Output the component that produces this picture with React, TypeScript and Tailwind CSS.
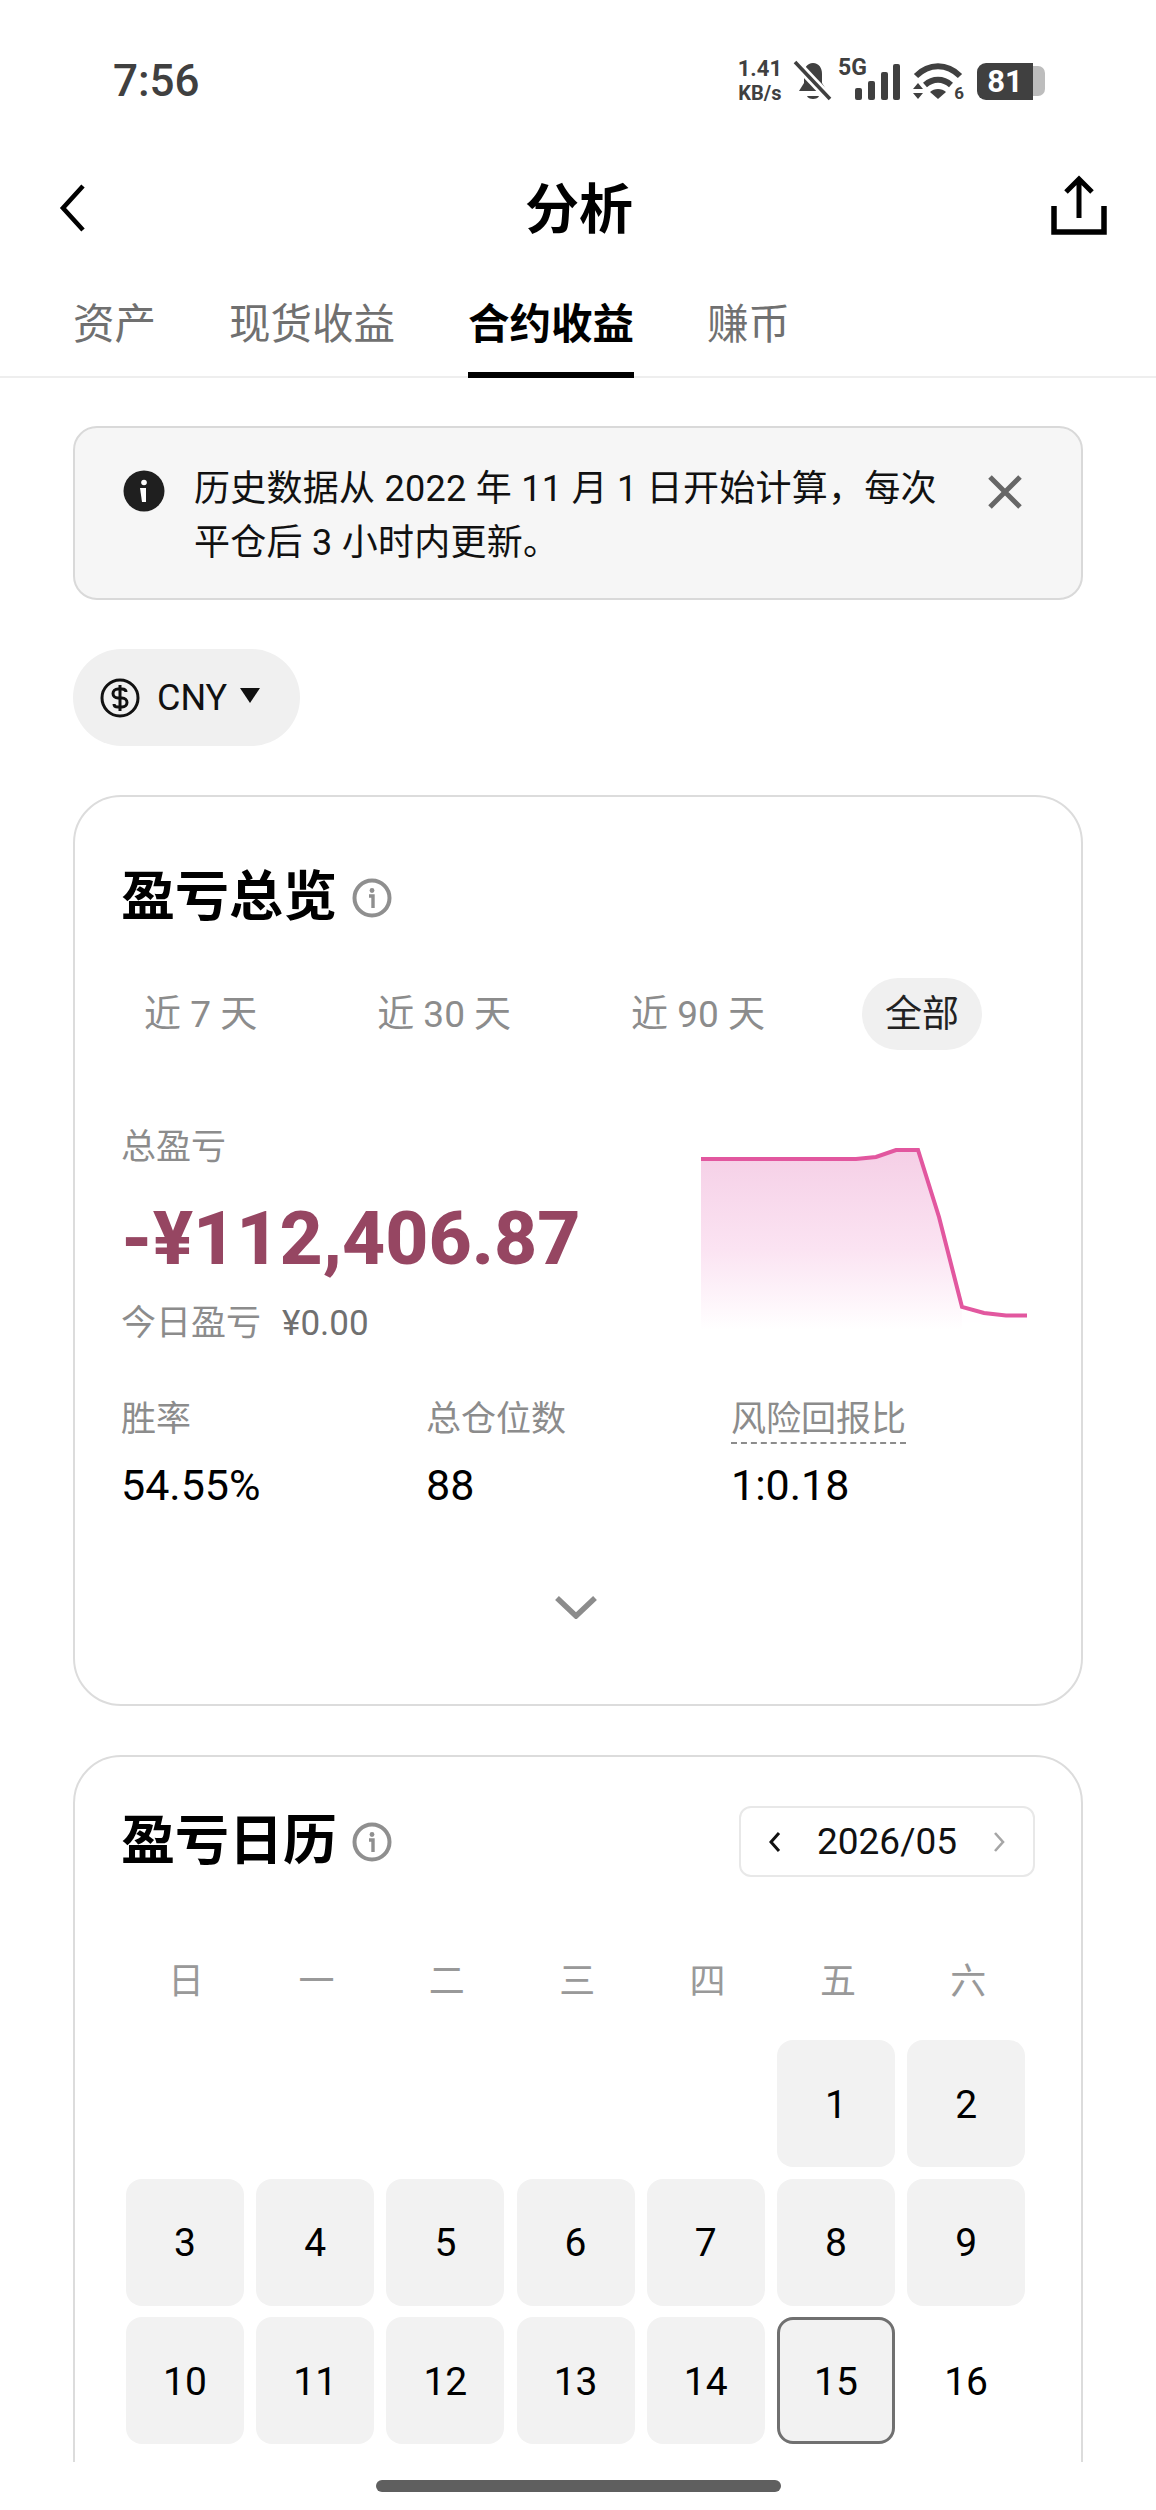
const weekdays = ["日", "一", "二", "三", "四", "五", "六"];
const days = Array.from({ length: 16 }, (_, i) => i + 1);
const tabs = ["资产", "现货收益", "合约收益", "赚币"];
const periods = ["近 7 天", "近 30 天", "近 90 天", "全部"];

function InfoOutline() {
  return (
    <svg width="40" height="40" viewBox="0 0 40 40" fill="none" className="shrink-0">
      <circle cx="20" cy="20" r="17.5" stroke="#8f8f8f" strokeWidth="4" />
      <circle cx="20" cy="12.5" r="2.4" fill="#8f8f8f" />
      <path d="M17 18h4v12" stroke="#8f8f8f" strokeWidth="3.4" />
    </svg>
  );
}

function StatusIcons() {
  return (
    <div className="flex items-center text-[#404040]">
      <div className="flex flex-col items-center font-bold leading-[25px]">
        <span className="text-[22px]">1.41</span>
        <span className="text-[20px]">KB/s</span>
      </div>
      {/* bell, muted */}
      <svg width="40" height="42" viewBox="0 0 40 42" className="ml-[11px]">
        <path d="M20 3c-6 0-9 5-9 11v9l-5 8h28l-5-8v-9c0-6-3-11-9-11z" fill="#404040" />
        <path d="M14 36h12c-1 4-11 4-12 0z" fill="#404040" />
        <path d="M3 3l33 35" stroke="#fff" strokeWidth="9" />
        <path d="M2 2l35 37" stroke="#404040" strokeWidth="3.6" />
      </svg>
      <div className="relative ml-[5px] h-[40px] w-[62px]">
        <span className="absolute left-0 top-[-5px] text-[23px] font-bold leading-[24px]">5G</span>
        <svg width="46" height="37" viewBox="0 0 46 37" className="absolute left-[17px] top-[3px]">
          <rect x="0" y="24" width="7" height="12" rx="2" fill="#404040" />
          <rect x="13" y="17" width="7" height="19" rx="2" fill="#404040" />
          <rect x="26" y="8" width="7" height="28" rx="2" fill="#404040" />
          <rect x="38" y="0" width="7" height="36" rx="2" fill="#404040" />
        </svg>
      </div>
      <div className="relative ml-[12px] h-[40px] w-[52px]">
        <svg width="52" height="40" viewBox="0 0 52 40">
          <path d="M4 15C17 2 35 2 48 15" stroke="#404040" strokeWidth="6" fill="none" />
          <path d="M13 24c8-7 18-7 26 0" stroke="#404040" strokeWidth="6" fill="none" />
          <path d="M18 31c4-4 12-4 16 0l-8 7z" fill="#404040" />
          <path d="M1 28l5-6 5 6zM1 32l5 6 5-6z" fill="#404040" />
        </svg>
        <span className="absolute right-0 top-[22px] text-[17px] font-bold leading-[20px]">6</span>
      </div>
      <div className="ml-[13px] flex h-[37px] items-center">
        <div className="flex h-[37px] w-[56px] items-center justify-center rounded-l-[9px] bg-[#404040] text-[31px] font-bold leading-none text-white">
          81
        </div>
        <div className="h-[30px] w-[12px] rounded-r-[7px] bg-[#bdbdbd]" />
      </div>
    </div>
  );
}

function PnlChart() {
  const line = "M702 1159H857L877 1157L897 1150H919L940 1217L963 1307L985 1313L1007 1315.5H1028";
  return (
    <svg width="326" height="184" viewBox="702 1148 326 184" className="mt-[98px] shrink-0">
      <defs>
        <linearGradient id="pnlFill" x1="0" y1="0" x2="0" y2="1">
          <stop offset="0" stopColor="#f5cfe6" />
          <stop offset="0.55" stopColor="#fbe3f2" />
          <stop offset="1" stopColor="#ffffff" />
        </linearGradient>
      </defs>
      <path d={`${line}L1028 1330H702Z`} fill="url(#pnlFill)" />
      <path d="M963 1307L985 1313L1007 1315.5H1028V1332H963Z" fill="#fff" fillOpacity="0.75" />
      <path d={line} fill="none" stroke="#e2579f" strokeWidth="4" />
    </svg>
  );
}

export default function App() {
  return (
    <div className="flex h-[2510px] w-[1156px] flex-col overflow-hidden bg-white font-['Roboto','Noto_Sans_CJK_SC',sans-serif] text-black">
      <div className="h-[2462px] shrink-0 overflow-hidden">
        {/* status bar */}
        <div className="flex h-[162px] items-center justify-between pl-[113px] pr-[111px]">
          <span className="text-[44px] font-medium leading-none text-[#404040]">7:56</span>
          <StatusIcons />
        </div>

        {/* header */}
        <div className="grid h-[92px] grid-cols-[1fr_auto_1fr] items-center pl-[50px] pr-[48px]">
          <svg width="28" height="50" viewBox="0 0 28 50" fill="none" className="ml-[8px]">
            <path d="M25 3L5 25l20 22" stroke="#000" strokeWidth="4.6" />
          </svg>
          <h1 className="mt-[6px] text-[54px] font-bold leading-none">分析</h1>
          <svg width="58" height="60" viewBox="0 0 58 60" fill="none" className="-mt-[6px] justify-self-end">
            <path d="M29 4v39M16 17L29 4l13 13" stroke="#000" strokeWidth="5" />
            <path d="M4 31v26h50V31" stroke="#000" strokeWidth="5.5" />
          </svg>
        </div>

        {/* tabs */}
        <div className="flex h-[124px] gap-[73px] border-b-2 border-[#eeeeee] pl-[73px]">
          {tabs.map((tab) => (
            <div
              key={tab}
              className={`-mb-[2px] h-[124px] pt-[47px] text-[41.5px] leading-[48px] ${
                tab === "合约收益" ? "border-b-[6px] border-black font-bold" : "font-normal text-[#707070]"
              }`}
            >
              {tab}
            </div>
          ))}
        </div>

        <div className="px-[73px] pt-[48px]">
          {/* notice */}
          <div className="flex h-[174px] items-start rounded-[24px] border-2 border-[#d9d9d9] bg-[#f6f6f6] pl-[48px] pr-[58px] pt-[34px]">
            <svg width="42" height="42" viewBox="0 0 42 42" className="mt-[8px] shrink-0">
              <circle cx="21" cy="21" r="20.5" fill="#1f1f1f" />
              <circle cx="21" cy="12.5" r="2.8" fill="#fff" />
              <path d="M17 18h6v14h-4z" fill="#fff" />
            </svg>
            <p className="ml-[29px] flex-1 text-[36px] leading-[54px] tracking-[0.27px] text-[#111]">
              历史数据从 2022 年 11 月 1 日开始计算，每次
              <br />
              平仓后 3 小时内更新。
            </p>
            <svg width="36" height="36" viewBox="0 0 36 36" fill="none" className="mt-[12px] shrink-0">
              <path d="M3 3l30 30M33 3L3 33" stroke="#666" strokeWidth="5" />
            </svg>
          </div>

          {/* currency */}
          <div className="mt-[49px] flex h-[97px] w-[227px] items-center rounded-full bg-[#f0f0f0] pl-[27px]">
            <svg width="40" height="40" viewBox="0 0 40 40" fill="none">
              <circle cx="20" cy="20" r="18" stroke="#111" strokeWidth="3" />
              <path
                d="M26 14c0-2-2-3-4-3h-4c-3 0-5 2-5 4.500s2 4.500 5 4.500h4c3 0 5 2 5 4.500s-2 4.500-5 4.500h-4c-2 0-4-1-4-3M20 7v26"
                stroke="#111"
                strokeWidth="3"
              />
            </svg>
            <span className="ml-[17px] text-[36px] leading-none text-[#111]">CNY</span>
            <svg width="20" height="15" viewBox="0 0 20 15" className="ml-[13px] mt-[-5px]">
              <path d="M0 0h20L10 15z" fill="#111" />
            </svg>
          </div>

          {/* overview card */}
          <div className="mt-[49px] h-[911px] rounded-[48px] border-2 border-[#dcdcdc] pl-[46px] pr-[50px] pt-[71px]">
            <div className="flex h-[60px] items-center">
              <h2 className="text-[54px] font-bold leading-[60px]">盈亏总览</h2>
              <span className="ml-[15px]">
                <InfoOutline />
              </span>
            </div>
            <div className="mt-[50px] flex h-[72px] gap-[74px]">
              {periods.map((period) => (
                <div
                  key={period}
                  className={`flex h-[72px] items-center rounded-full px-[23px] pt-[2px] text-[37px] ${
                    period === "全部" ? "bg-[#f0f0f0] text-[#222]" : "text-[#8c8c8c]"
                  }`}
                >
                  {period}
                </div>
              ))}
            </div>

            <div className="flex items-start justify-between pr-[4px]">
              <div className="pt-[76px]">
                <div className="text-[35px] leading-[44px] text-[#8c8c8c]">总盈亏</div>
                <div className="mt-[26px] text-[75px] font-extrabold leading-[84px] text-[#964662]">-¥112,406.87</div>
                <div className="mt-[22px] flex text-[35px] leading-[44px] text-[#8c8c8c]">
                  今日盈亏<span className="ml-[21px] text-[#707070]">¥0.00</span>
                </div>
              </div>
              <PnlChart />
            </div>

            <div className="mt-[52px] grid grid-cols-[305px_305px_1fr]">
              <div>
                <div className="text-[35px] leading-[44px] text-[#8c8c8c]">胜率</div>
                <div className="mt-[18px] text-[43px] leading-[50px]">54.55%</div>
              </div>
              <div>
                <div className="text-[35px] leading-[44px] text-[#8c8c8c]">总仓位数</div>
                <div className="mt-[18px] text-[43px] leading-[50px]">88</div>
              </div>
              <div>
                <div className="w-fit border-b-2 border-dashed border-[#8c8c8c] text-[35px] leading-[44px] text-[#8c8c8c]">
                  风险回报比
                </div>
                <div className="-mt-[2px] pt-[18px] text-[43px] leading-[50px]">1:0.18</div>
              </div>
            </div>

            <div className="mt-[85px] flex justify-center">
              <svg width="42" height="24" viewBox="0 0 42 24" fill="none">
                <path d="M2 3l19 18L40 3" stroke="#8c8c8c" strokeWidth="5.5" />
              </svg>
            </div>
          </div>

          {/* calendar card */}
          <div className="mt-[49px] rounded-[48px] border-2 border-[#dcdcdc] pb-[160px] pl-[46px] pr-[46px] pt-[49px]">
            <div className="flex h-[71px] items-center justify-between">
              <div className="flex items-center">
                <h2 className="text-[54px] font-bold leading-[60px]">盈亏日历</h2>
                <span className="ml-[15px]">
                  <InfoOutline />
                </span>
              </div>
              <div className="flex h-[71px] w-[296px] items-center justify-between rounded-[12px] border-2 border-[#e8e8e8] px-[28px]">
                <svg width="12" height="22" viewBox="0 0 12 22" fill="none">
                  <path d="M10 2L2 11l8 9" stroke="#111" strokeWidth="3" />
                </svg>
                <span className="text-[37px] leading-none text-[#111]">2026/05</span>
                <svg width="12" height="22" viewBox="0 0 12 22" fill="none">
                  <path d="M2 2l8 9-8 9" stroke="#a6a6a6" strokeWidth="2.6" />
                </svg>
              </div>
            </div>

            <div className="mt-[83px] grid grid-cols-[repeat(7,118px)] gap-x-[12.4px] pl-[6px]">
              {weekdays.map((day) => (
                <div key={day} className="text-center text-[36px] leading-[44px] text-[#999999]">
                  {day}
                </div>
              ))}
            </div>

            <div className="mt-[36px] grid grid-cols-[repeat(7,118px)] gap-x-[12.2px] gap-y-[11.5px] pl-[5px]">
              <div className="col-span-5" />
              {days.map((day) => (
                <div
                  key={day}
                  className={`flex h-[127px] items-center justify-center rounded-[16px] pt-[3px] text-[39px] leading-none ${
                    day === 15 ? "border-[3px] border-[#707070] bg-[#f2f2f2]" : day < 15 ? "bg-[#f2f2f2]" : ""
                  }`}
                >
                  {day}
                </div>
              ))}
            </div>
          </div>
        </div>
      </div>

      {/* home indicator */}
      <div className="flex flex-1 justify-center pt-[18px]">
        <div className="h-[12px] w-[405px] rounded-full bg-[#5f5f5f]" />
      </div>
    </div>
  );
}
